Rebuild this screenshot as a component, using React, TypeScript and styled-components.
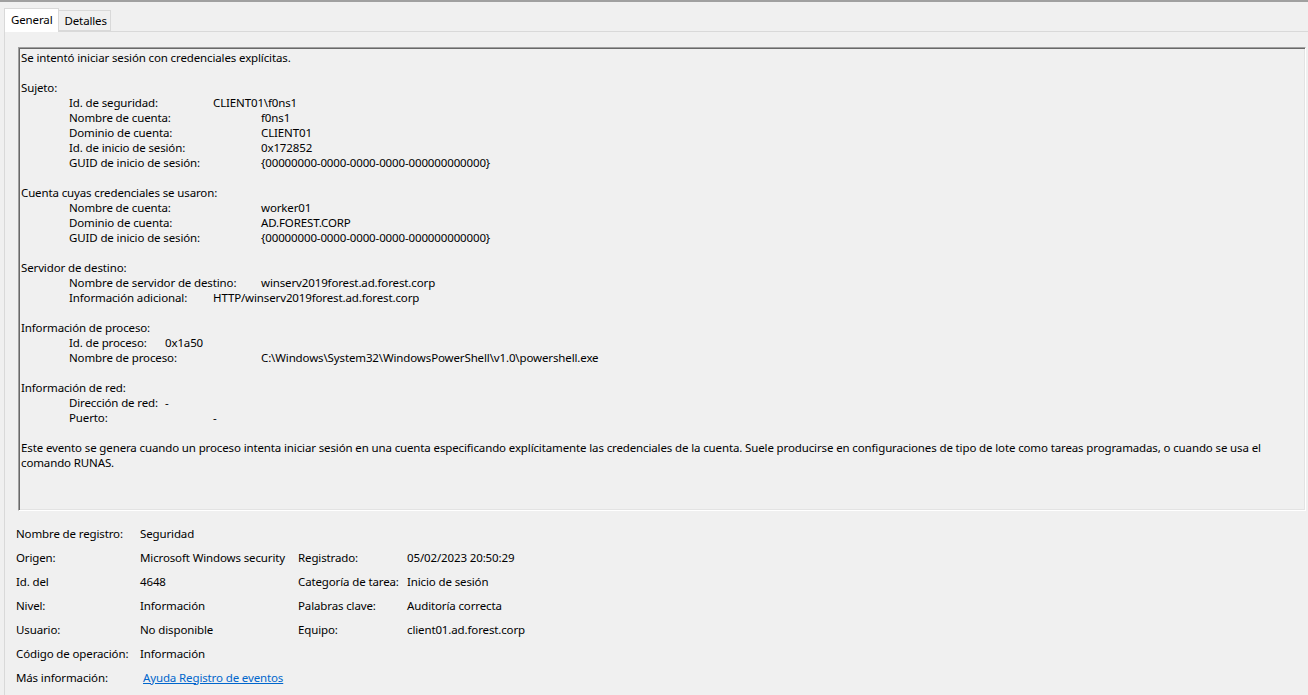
import React from "react";
import styled, { createGlobalStyle } from "styled-components";

const GlobalStyle = createGlobalStyle`
  html, body {
    margin: 0;
    padding: 0;
    background: #f0f0f0;
  }
  body {
    font-family: "Noto Sans", "Liberation Sans", sans-serif;
    font-size: 11.5px;
    letter-spacing: -0.13px;
    color: #000;
  }
`;

const Window = styled.div`
  width: 1308px;
  height: 695px;
  overflow: hidden;
  border-top: 2px solid #a0a0a0;
  box-sizing: border-box;
  background: #f0f0f0;
`;

const TabStrip = styled.div`
  display: flex;
  align-items: flex-end;
  height: 29px;
  padding-left: 4px;
  position: relative;
  z-index: 1;
`;

const Tab = styled.div<{ $selected?: boolean }>`
  box-sizing: border-box;
  height: ${(p) => (p.$selected ? "24px" : "21px")};
  padding: ${(p) => (p.$selected ? "0 6px 2px 6px" : "0 3px 0 5px")};
  margin-bottom: ${(p) => (p.$selected ? "-1px" : "0")};
  display: flex;
  align-items: center;
  background: ${(p) => (p.$selected ? "#ffffff" : "#f0f0f0")};
  border: 1px solid #d9d9d9;
  border-bottom: ${(p) => (p.$selected ? "none" : "1px solid #d9d9d9")};
  margin-left: ${(p) => (p.$selected ? "0" : "-1px")};
  white-space: nowrap;
  line-height: 15px;
`;

const Panel = styled.div`
  margin-left: 4px;
  border-left: 1px solid #d9d9d9;
  border-top: 1px solid #d9d9d9;
  padding: 15px 0 0 11px;
  height: 700px;
`;

const TextBox = styled.div`
  box-sizing: border-box;
  width: 1288px;
  height: 464px;
  margin-left: 2px;
  border-style: solid;
  border-width: 1px;
  border-color: #a0a0a0 #ffffff #ffffff #a0a0a0;
  box-shadow: inset 1px 1px 0 #696969, inset -1px -1px 0 #e3e3e3;
  padding: 2px 2px 0 2px;
  background: #f0f0f0;
  overflow: hidden;
`;

const Line = styled.div<{ $indent?: number }>`
  display: flex;
  height: 15px;
  line-height: 15px;
  white-space: nowrap;
  padding-left: ${(p) => (p.$indent ?? 0) * 48}px;
`;

const Label = styled.span<{ $width: number }>`
  flex: 0 0 ${(p) => p.$width}px;
  overflow: visible;
`;

const Value = styled.span``;

const PropsGrid = styled.div`
  display: grid;
  grid-template-columns: 124px 158px 109px 1fr;
  grid-auto-rows: 24px;
  align-items: center;
  margin-top: 10px;
  white-space: nowrap;
`;

const Cell = styled.div<{ $offset?: number }>`
  line-height: 15px;
  padding-left: ${(p) => p.$offset ?? 0}px;
`;

const Link = styled.a`
  color: #0066cc;
  text-decoration: underline;
  cursor: pointer;
`;

type Entry = { text?: string; label?: string; value?: string; col?: number };

const lines: Entry[] = [
  { text: "Se intentó iniciar sesión con credenciales explícitas." },
  { text: "" },
  { text: "Sujeto:" },
  { label: "Id. de seguridad:", value: "CLIENT01\\f0ns1", col: 4 },
  { label: "Nombre de cuenta:", value: "f0ns1", col: 5 },
  { label: "Dominio de cuenta:", value: "CLIENT01", col: 5 },
  { label: "Id. de inicio de sesión:", value: "0x172852", col: 5 },
  { label: "GUID de inicio de sesión:", value: "{00000000-0000-0000-0000-000000000000}", col: 5 },
  { text: "" },
  { text: "Cuenta cuyas credenciales se usaron:" },
  { label: "Nombre de cuenta:", value: "worker01", col: 5 },
  { label: "Dominio de cuenta:", value: "AD.FOREST.CORP", col: 5 },
  { label: "GUID de inicio de sesión:", value: "{00000000-0000-0000-0000-000000000000}", col: 5 },
  { text: "" },
  { text: "Servidor de destino:" },
  { label: "Nombre de servidor de destino:", value: "winserv2019forest.ad.forest.corp", col: 5 },
  { label: "Información adicional:", value: "HTTP/winserv2019forest.ad.forest.corp", col: 4 },
  { text: "" },
  { text: "Información de proceso:" },
  { label: "Id. de proceso:", value: "0x1a50", col: 3 },
  { label: "Nombre de proceso:", value: "C:\\Windows\\System32\\WindowsPowerShell\\v1.0\\powershell.exe", col: 5 },
  { text: "" },
  { text: "Información de red:" },
  { label: "Dirección de red:", value: "-", col: 3 },
  { label: "Puerto:", value: "-", col: 4 },
  { text: "" },
  {
    text:
      "Este evento se genera cuando un proceso intenta iniciar sesión en una cuenta especificando explícitamente las credenciales de la cuenta. Suele producirse en configuraciones de tipo de lote como tareas programadas, o cuando se usa el",
  },
  { text: "comando RUNAS." },
];

type Prop = [string, React.ReactNode, string?, string?];

const props: Prop[] = [
  ["Nombre de registro:", "Seguridad"],
  ["Origen:", "Microsoft Windows security", "Registrado:", "05/02/2023 20:50:29"],
  ["Id. del", "4648", "Categoría de tarea:", "Inicio de sesión"],
  ["Nivel:", "Información", "Palabras clave:", "Auditoría correcta"],
  ["Usuario:", "No disponible", "Equipo:", "client01.ad.forest.corp"],
  ["Código de operación:", "Información"],
];

export default function App() {
  return (
    <>
      <GlobalStyle />
      <Window>
        <TabStrip>
          <Tab $selected>General</Tab>
          <Tab>Detalles</Tab>
        </TabStrip>
        <Panel>
          <TextBox>
            {lines.map((l, i) =>
              l.label ? (
                <Line key={i} $indent={1}>
                  <Label $width={((l.col ?? 4) - 1) * 48}>{l.label}</Label>
                  <Value>{l.value}</Value>
                </Line>
              ) : (
                <Line key={i}>{l.text || "\u00a0"}</Line>
              )
            )}
          </TextBox>
          <PropsGrid>
            {props.map((p, i) => (
              <React.Fragment key={i}>
                <Cell>{p[0]}</Cell>
                <Cell>{p[1]}</Cell>
                <Cell>{p[2] ?? ""}</Cell>
                <Cell>{p[3] ?? ""}</Cell>
              </React.Fragment>
            ))}
            <Cell>Más información:</Cell>
            <Cell $offset={3}>
              <Link>Ayuda Registro de eventos</Link>
            </Cell>
            <Cell />
            <Cell />
          </PropsGrid>
        </Panel>
      </Window>
    </>
  );
}
